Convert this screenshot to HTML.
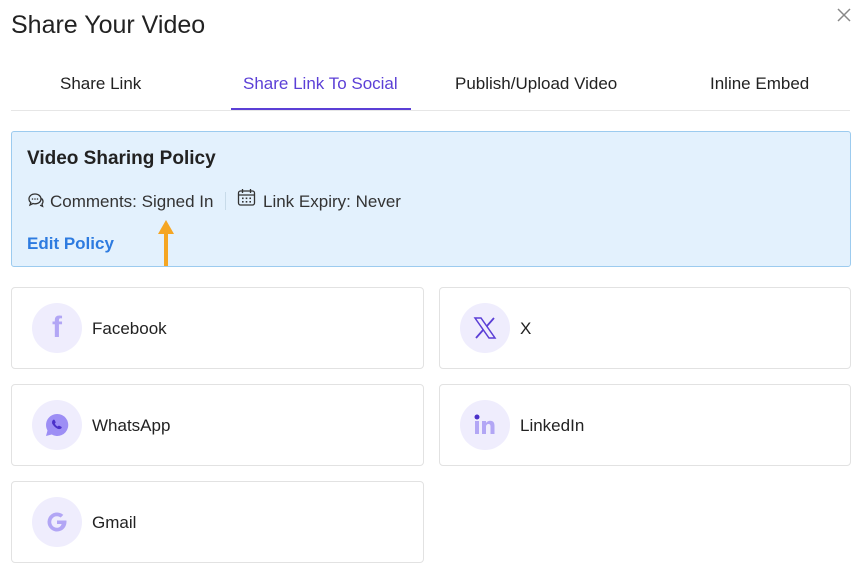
<!DOCTYPE html>
<html><head><style>
*{margin:0;padding:0;box-sizing:border-box}
body{width:862px;height:567px;background:#fff;font-family:"Liberation Sans",sans-serif;color:#1f1f1f;position:relative;overflow:hidden}
.a{position:absolute}
.title{left:11px;top:11px;font-size:25px;color:#222}
.tab{top:74px;font-size:17px;color:#222;text-align:center}
.card{border:1px solid #e2e2e2;border-radius:4px;width:413px;height:82px;background:#fff}
.circ{position:absolute;left:20px;top:15px;width:50px;height:50px;border-radius:50%;background:#efedfd;display:flex;align-items:center;justify-content:center}
.lbl{position:absolute;left:80px;top:31px;font-size:17px;color:#222}
</style></head><body>
<div class="a title">Share Your Video</div>
<svg class="a" style="left:836px;top:7px" width="16" height="16"><path d="M2 2L14 14M14 2L2 14" stroke="#888" stroke-width="1.5"/></svg>
<div class="a tab" style="left:60px">Share Link</div>
<div class="a tab" style="left:243px;color:#5b3fd6">Share Link To Social</div>
<div class="a tab" style="left:455px">Publish/Upload Video</div>
<div class="a tab" style="left:710px">Inline Embed</div>
<div class="a" style="left:11px;top:110px;width:839px;height:1px;background:#e6e6e6"></div>
<div class="a" style="left:231px;top:108px;width:180px;height:2px;background:#5b3fd6"></div>
<div class="a" style="left:11px;top:131px;width:840px;height:136px;background:#e3f1fd;border:1px solid #9ccbef;border-radius:3px"></div>
<div class="a" style="left:27px;top:148px;font-size:19px;font-weight:bold;color:#222">Video Sharing Policy</div>
<svg class="a" style="left:27px;top:192px" width="18" height="18" viewBox="0 0 18 18"><path d="M8 2C4 2 2 4.5 2 7c0 1.5.7 2.7 1.8 3.5L3 13l3-1.5c.6.2 1.3.3 2 .3 4 0 6-2.5 6-4.8S12 2 8 2z" fill="none" stroke="#333" stroke-width="1.3"/><circle cx="5.5" cy="7" r=".8" fill="#333"/><circle cx="8" cy="7" r=".8" fill="#333"/><circle cx="10.5" cy="7" r=".8" fill="#333"/><path d="M14.5 6.5c1 .7 1.5 1.8 1.5 3 0 1-.4 1.9-1 2.6l.6 2.2-2.5-1.1" fill="none" stroke="#333" stroke-width="1.3"/></svg>
<div class="a" style="left:50px;top:192px;font-size:17px;color:#333">Comments: Signed In</div>
<div class="a" style="left:225px;top:192px;width:1px;height:18px;background:#c8dbe9"></div>
<svg class="a" style="left:237px;top:188px" width="19" height="19" viewBox="0 0 19 19"><rect x="1.5" y="3" width="16" height="14" rx="2" fill="none" stroke="#333" stroke-width="1.3"/><path d="M1.5 7h16M5.5 1v4M13.5 1v4" stroke="#333" stroke-width="1.3"/><g fill="#333"><rect x="5" y="9.5" width="1.6" height="1.6"/><rect x="8.7" y="9.5" width="1.6" height="1.6"/><rect x="12.4" y="9.5" width="1.6" height="1.6"/><rect x="5" y="13" width="1.6" height="1.6"/><rect x="8.7" y="13" width="1.6" height="1.6"/><rect x="12.4" y="13" width="1.6" height="1.6"/></g></svg>
<div class="a" style="left:263px;top:192px;font-size:17px;color:#333">Link Expiry: Never</div>
<div class="a" style="left:27px;top:234px;font-size:17px;font-weight:bold;color:#2d7be0">Edit Policy</div>
<svg class="a" style="left:156px;top:218px" width="20" height="50"><path d="M10 2L2 16h6v32h4V16h6z" fill="#f5a623"/></svg>

<div class="a card" style="left:11px;top:287px"><div class="circ"><span style="font-size:30px;font-weight:bold;color:#b2a6f5">f</span></div><div class="lbl">Facebook</div></div>
<div class="a card" style="left:439px;top:287px;width:412px"><div class="circ"><svg width="24" height="24" viewBox="0 0 24 24"><path d="M2 2h6l14 20h-6z" fill="none" stroke="#5b3fd6" stroke-width="1.5"/><path d="M21 2L13.5 10.5M3 22l7.5-8.5" stroke="#5b3fd6" stroke-width="1.8"/></svg></div><div class="lbl">X</div></div>
<div class="a card" style="left:11px;top:384px"><div class="circ"><svg width="26" height="26" viewBox="0 0 26 26"><path d="M13 2a11 11 0 0 0-9.5 16.5L2 24l5.7-1.5A11 11 0 1 0 13 2z" fill="#9d8ef5"/><path d="M9 8c.5-.6 1.3-.5 1.6 0l1 2c.2.4 0 .8-.3 1.1l-.5.5c.6 1.3 1.6 2.3 2.9 2.9l.5-.5c.3-.3.7-.5 1.1-.3l2 1c.5.3.6 1.1 0 1.6-1 1-2.5 1.1-4 .3-2.3-1.2-4-3-5.2-5.2C8 9.9 8 8.9 9 8z" fill="#4a30c9"/></svg></div><div class="lbl">WhatsApp</div></div>
<div class="a card" style="left:439px;top:384px;width:412px"><div class="circ"><svg width="26" height="26" viewBox="0 0 26 26"><circle cx="5" cy="5" r="2.5" fill="#4a30c9"/><rect x="3" y="9" width="4" height="13" fill="#b2a6f5"/><path d="M10 9h4v2c1-1.5 2.5-2.3 4.3-2.3 2.8 0 4.2 1.8 4.2 5V22h-4v-7.5c0-1.7-.7-2.5-2-2.5s-2.5 1-2.5 2.7V22h-4z" fill="#b2a6f5"/></svg></div><div class="lbl">LinkedIn</div></div>
<div class="a card" style="left:11px;top:481px"><div class="circ"><svg width="26" height="26" viewBox="0 0 26 26"><path d="M21 11.5h-8v3.5h4.6c-.6 2.3-2.5 3.8-4.6 3.8a5.8 5.8 0 1 1 3.7-10.3l2.6-2.6A9.5 9.5 0 1 0 22.5 13c0-.5 0-1-.1-1.5z" fill="#b2a6f5"/></svg></div><div class="lbl">Gmail</div></div>
</body></html>
